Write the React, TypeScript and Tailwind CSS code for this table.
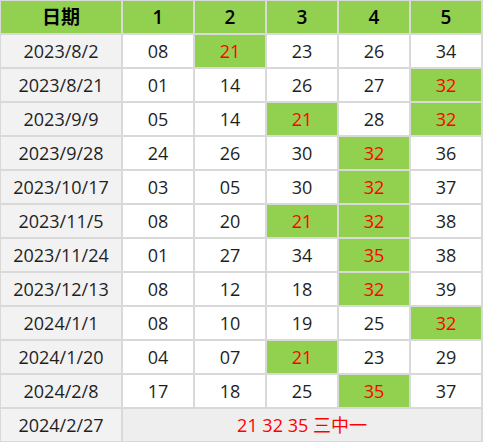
const rows: { date: string; nums: string[]; hits: number[] }[] = [
  { date: "2023/8/2", nums: ["08", "21", "23", "26", "34"], hits: [1] },
  { date: "2023/8/21", nums: ["01", "14", "26", "27", "32"], hits: [4] },
  { date: "2023/9/9", nums: ["05", "14", "21", "28", "32"], hits: [2, 4] },
  { date: "2023/9/28", nums: ["24", "26", "30", "32", "36"], hits: [3] },
  { date: "2023/10/17", nums: ["03", "05", "30", "32", "37"], hits: [3] },
  { date: "2023/11/5", nums: ["08", "20", "21", "32", "38"], hits: [2, 3] },
  { date: "2023/11/24", nums: ["01", "27", "34", "35", "38"], hits: [3] },
  { date: "2023/12/13", nums: ["08", "12", "18", "32", "39"], hits: [3] },
  { date: "2024/1/1", nums: ["08", "10", "19", "25", "32"], hits: [4] },
  { date: "2024/1/20", nums: ["04", "07", "21", "23", "29"], hits: [2] },
  { date: "2024/2/8", nums: ["17", "18", "25", "35", "37"], hits: [3] },
];

export default function App() {
  return (
    <div
      className="w-[483px] h-[442px] bg-[#d9d9d9] pt-px pl-px pr-[2px] pb-px"
      style={{ fontFamily: '"Open Sans", "Noto Sans CJK SC", sans-serif' }}
    >
      <div className="grid grid-cols-[120px_repeat(5,70px)] auto-rows-[32px] gap-[2px] text-[18px] text-[#1f1f1f]">
        {/* header */}
        <div className="bg-[#92d050] flex items-center justify-center text-[19px] font-bold text-black">日期</div>
        {["1", "2", "3", "4", "5"].map((h) => (
          <div key={h} className="bg-[#92d050] flex items-center justify-center text-[19px] font-semibold text-black">
            {h}
          </div>
        ))}

        {rows.map((r) => (
          <>
            <div key={r.date} className="bg-[#f2f2f2] flex items-center justify-center">
              {r.date}
            </div>
            {r.nums.map((n, i) =>
              r.hits.includes(i) ? (
                <div key={r.date + i} className="bg-[#92d050] flex items-center justify-center text-[#ff0000]">
                  {n}
                </div>
              ) : (
                <div key={r.date + i} className="bg-white flex items-center justify-center">
                  {n}
                </div>
              )
            )}
          </>
        ))}

        {/* last draw */}
        <div className="bg-[#f2f2f2] flex items-center justify-center">2024/2/27</div>
        <div className="col-span-5 bg-[#eeeeee] flex items-center justify-center text-[#ff0000]">
          21 32 35 三中一
        </div>
      </div>
    </div>
  );
}
